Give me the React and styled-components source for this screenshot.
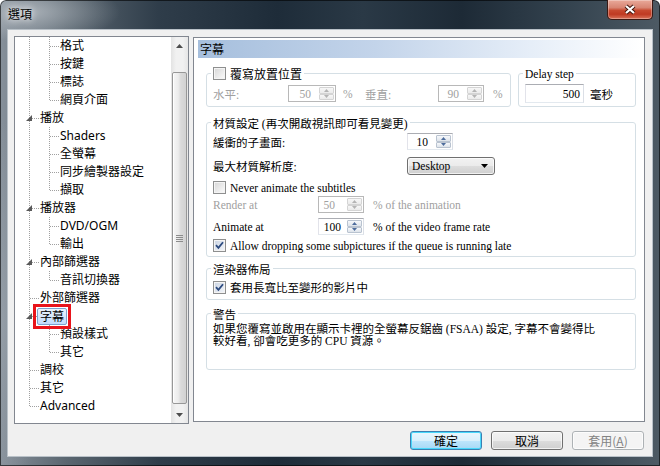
import React from "react";
import styled, { createGlobalStyle } from "styled-components";

const UI_FONT = `"Noto Sans", "Noto Sans CJK TC", sans-serif`;
const PAGE_FONT = `"Liberation Serif", "Noto Sans CJK TC", serif`;
const CJK_FONT = `"Noto Sans CJK TC", "Noto Sans", sans-serif`;

const GlobalStyle = createGlobalStyle`
  html, body { margin: 0; padding: 0; background: #ffffff; }
  body { width: 660px; height: 466px; overflow: hidden; }
`;

const Window = styled.div`
  width: 660px;
  height: 466px;
  display: flex;
  flex-direction: column;
  border-radius: 6px 6px 0 0;
  overflow: hidden;
  background:
    radial-gradient(ellipse 90px 30px at 30px 12px, rgba(190, 196, 202, 0.7), transparent),
    radial-gradient(ellipse 40px 200px at 2px 320px, rgba(170, 178, 186, 0.4), transparent),
    linear-gradient(to right, #86909a 0%, #5a6670 10%, #2f3d4a 24%, #1e2c39 42%, #2a3946 55%, #1d2a36 70%, #34434f 86%, #4d5a64 100%);
  box-shadow: inset 0 0 0 1px rgba(0, 0, 0, 0.6);
`;

const TitleBar = styled.div`
  height: 29px;
  display: flex;
  align-items: flex-start;
  flex: none;
`;

const Title = styled.div`
  margin: 6px 0 0 8px;
  font: 12px/16px ${CJK_FONT};
  color: #000;
  text-shadow: 0 0 6px rgba(255, 255, 255, 0.9), 0 0 10px rgba(255, 255, 255, 0.6);
`;

const CloseBtn = styled.div`
  width: 46px;
  height: 20px;
  margin: 0 7px 0 auto;
  box-sizing: border-box;
  border: 1px solid #3b1a14;
  border-top: none;
  border-radius: 0 0 5px 5px;
  background: linear-gradient(to bottom, #e9a99a 0%, #d88573 40%, #c7492f 55%, #bf3a22 75%, #d9735a 100%);
  box-shadow: inset 0 0 0 1px rgba(255, 255, 255, 0.3);
  display: flex;
  align-items: center;
  justify-content: center;
`;

const Client = styled.div`
  flex: 1;
  margin: 0 7px 9px 7px;
  border: 1px solid #b9c1c8;
  background: #f0f0f0;
  display: flex;
  flex-direction: column;
  padding: 6px 6px 0 6px;
`;

const Body = styled.div`
  display: flex;
  align-items: flex-start;
  gap: 4px;
`;

/* ---------- tree ---------- */

const Tree = styled.div`
  width: 175px;
  height: 388px;
  box-sizing: border-box;
  border: 1px solid #828790;
  background: #fff;
  display: flex;
  flex: none;
`;

const TreeList = styled.div`
  flex: 1;
  display: flex;
  flex-direction: column;
  font: 12px ${UI_FONT};
  color: #000;
`;

const Row = styled.div`
  height: 18px;
  display: flex;
  align-items: center;
  padding-left: 4px;
`;

const dotV = "repeating-linear-gradient(to bottom, #a0a0a0 0 1px, transparent 1px 2px)";
const dotH = "repeating-linear-gradient(to right, #a0a0a0 0 1px, transparent 1px 2px)";

const Guide = styled.div`
  width: 20px;
  height: 18px;
  flex: none;
  display: flex;
  align-items: center;
  justify-content: center;
  background: ${(p) =>
    [
      p.$v === "full" && `${dotV} 10px 0 / 1px 100% no-repeat`,
      p.$v === "half" && `${dotV} 10px 0 / 1px 10px no-repeat`,
      p.$h && `${dotH} 11px 9px / 9px 1px no-repeat`,
    ]
      .filter(Boolean)
      .join(", ") || "none"};
`;

const Label = styled.span`
  padding: 0 1px;
  line-height: 16px;
  white-space: nowrap;
`;

const Marked = styled.span`
  position: relative;
  z-index: 1;
  display: inline-flex;
  border: 3px solid #e8141b;
  padding: 1px;
  margin-left: -6px;
`;

const Selected = styled.span`
  display: inline-block;
  border: 1px solid #7da2ce;
  border-radius: 2px;
  background: linear-gradient(to bottom, #ebf4fd, #c1dcfc);
  padding: 0 2px;
  line-height: 15px;
  white-space: nowrap;
`;

const ScrollBar = styled.div`
  width: 17px;
  flex: none;
  display: flex;
  flex-direction: column;
  background: linear-gradient(to right, #e3e3e3, #f1f1f1 30%, #f1f1f1 70%, #e6e6e6);
`;

const ScrollArrow = styled.div`
  height: 17px;
  display: flex;
  align-items: center;
  justify-content: center;
`;

const Track = styled.div`
  flex: 1;
  display: flex;
  flex-direction: column;
  padding: 18px 0 2px;
`;

const Thumb = styled.div`
  flex: 1;
  margin: 0 1px;
  border: 1px solid #979797;
  border-radius: 2px;
  background: linear-gradient(to right, #f6f6f6 0%, #ececec 40%, #dadada 60%, #d2d2d2 100%);
  box-shadow: inset 1px 0 0 #fff;
  display: flex;
  align-items: center;
  justify-content: center;
`;

/* ---------- page ---------- */

const Panel = styled.div`
  width: 452px;
  height: 385px;
  margin-top: 1px;
  box-sizing: border-box;
  border: 1px solid #828790;
  background: #fff;
  padding: 2px 2px 0 4px;
  font: 11.5px ${PAGE_FONT};
  color: #000;
`;

const Header = styled.div`
  height: 18px;
  line-height: 18px;
  padding-left: 2px;
  font: 12px/18px ${CJK_FONT};
  background: linear-gradient(to right, #a6bfdd 0%, #c3d4ea 40%, #e6eef8 75%, #ffffff 100%);
`;

const Content = styled.div`
  padding: 15px 6px 0 8px;
  display: flex;
  flex-direction: column;
`;

const TopRow = styled.div`
  display: flex;
  gap: 7px;
`;

const Group = styled.div`
  box-sizing: border-box;
  width: ${(p) => (p.$w ? `${p.$w}px` : "auto")};
  height: ${(p) => p.$h}px;
  margin-top: ${(p) => p.$mt || 0}px;
  border: 1px solid #d5dfe5;
  border-radius: 3px;
  padding: 0 6px;
  display: flex;
  flex-direction: column;
`;

const Legend = styled.div`
  align-self: flex-start;
  display: flex;
  align-items: center;
  gap: 4px;
  height: 13px;
  margin: -7px 0 0 -2px;
  padding: 0 2px;
  background: #fff;
  white-space: nowrap;
`;

const Line = styled.div`
  display: flex;
  align-items: center;
  margin-top: ${(p) => p.$mt || 0}px;
  white-space: nowrap;
  color: ${(p) => (p.$off ? "#a0a0a0" : "#000")};
`;

const Text = styled.span`
  width: ${(p) => (p.$w ? `${p.$w}px` : "auto")};
  margin-left: ${(p) => p.$ml || 0}px;
  flex: none;
  color: ${(p) => (p.$off ? "#a0a0a0" : "inherit")};
`;

const SpinBox = styled.div`
  display: flex;
  flex: none;
  box-sizing: border-box;
  width: ${(p) => p.$w}px;
  height: ${(p) => p.$h}px;
  border: 1px solid;
  border-color: ${(p) => (p.$off ? "#b8b8b8" : "#abadb3 #dbdfe6 #e3e9ef #e2e3ea")};
  background: #fff;
  color: ${(p) => (p.$off ? "#a0a0a0" : "#000")};
`;

const SpinValue = styled.div`
  flex: 1;
  text-align: right;
  padding-right: ${(p) => p.$pr}px;
  align-self: center;
`;

const SpinButtons = styled.div`
  width: 15px;
  margin: 1px 1px 1px 0;
  display: flex;
  flex-direction: column;
`;

const SpinBtn = styled.div`
  flex: 1;
  border: 1px solid ${(p) => (p.$off ? "#d4d4d4" : "#b9c3d0")};
  border-radius: 1px;
  background: ${(p) =>
    p.$off ? "linear-gradient(#f7f7f7, #ebebeb)" : "linear-gradient(#f6f8fb, #dde3ea)"};
  display: flex;
  align-items: center;
  justify-content: center;
`;

const Combo = styled.div`
  box-sizing: border-box;
  width: 88px;
  height: 18px;
  border: 1px solid #707070;
  border-radius: 3px;
  background: linear-gradient(to bottom, #f2f2f2 0%, #ebebeb 50%, #dddddd 51%, #cfcfcf 100%);
  box-shadow: inset 0 0 0 1px rgba(255, 255, 255, 0.7);
  display: flex;
  align-items: center;
  justify-content: space-between;
  padding: 0 6px 0 4px;
`;

const Box = styled.span`
  width: 13px;
  height: 13px;
  flex: none;
  box-sizing: border-box;
  border: 1px solid #8e8f8f;
  background: ${(p) =>
    p.$on ? "linear-gradient(135deg, #c9d3e2, #f4f6fa)" : "linear-gradient(135deg, #d6d6d6, #fcfcfc)"};
  box-shadow: inset 0 0 0 1px #f4f4f4;
  display: inline-flex;
  align-items: center;
  justify-content: center;
`;

const CheckLine = styled(Line)`
  gap: 4px;
`;

const Note = styled.div`
  margin-top: 3px;
  line-height: 12px;
  white-space: nowrap;
`;

/* ---------- footer ---------- */

const Footer = styled.div`
  margin-top: 7px;
  display: flex;
  justify-content: flex-end;
  gap: 9px;
  padding-right: 2px;
`;

const Button = styled.div`
  width: 72px;
  height: 19px;
  box-sizing: border-box;
  border-radius: 3px;
  display: flex;
  align-items: center;
  justify-content: center;
  font: 12px ${CJK_FONT};
  border: 1px solid ${(p) => (p.$kind === "default" ? "#3c7fb1" : p.$kind === "off" ? "#adb2b5" : "#707070")};
  color: ${(p) => (p.$kind === "off" ? "#838383" : "#000")};
  background: ${(p) =>
    p.$kind === "default"
      ? "linear-gradient(to bottom, #eaf6fd 0%, #d9f0fc 50%, #bee6fd 51%, #a7d9f5 100%)"
      : p.$kind === "off"
      ? "#f4f4f4"
      : "linear-gradient(to bottom, #f2f2f2 0%, #ebebeb 50%, #dddddd 51%, #cfcfcf 100%)"};
  box-shadow: ${(p) =>
    p.$kind === "default" ? "inset 0 0 0 1px #48d8fb" : "inset 0 0 0 1px rgba(255,255,255,0.7)"};
`;

/* ---------- small drawings ---------- */

const Expander = () => (
  <svg width="6" height="6" viewBox="0 0 6 6">
    <polygon points="6,0 6,6 0,6" fill="#595959" />
  </svg>
);

const Tri = ({ up, color, w = 7, h = 4 }) => (
  <svg width={w} height={h} viewBox="0 0 7 4">
    <polygon points={up ? "3.5,0 7,4 0,4" : "0,0 7,0 3.5,4"} fill={color} />
  </svg>
);

const Check = ({ on }) => (
  <Box $on={on}>
    {on && (
      <svg width="9" height="9" viewBox="0 0 9 9">
        <path d="M1 4.2 L3.4 6.8 L8 1.2" fill="none" stroke="#2c4a7f" strokeWidth="1.8" />
      </svg>
    )}
  </Box>
);

const Spinner = ({ value, w, h = 17, off, pr = 8 }) => (
  <SpinBox $w={w} $h={h} $off={off}>
    <SpinValue $pr={pr}>{value}</SpinValue>
    <SpinButtons>
      <SpinBtn $off={off}>
        <Tri up w={5} h={3} color={off ? "#b4b4b4" : "#4d6c9c"} />
      </SpinBtn>
      <SpinBtn $off={off}>
        <Tri w={5} h={3} color={off ? "#b4b4b4" : "#4d6c9c"} />
      </SpinBtn>
    </SpinButtons>
  </SpinBox>
);

const rows = [
  { text: "格式", level: 1 },
  { text: "按鍵", level: 1 },
  { text: "標誌", level: 1 },
  { text: "網頁介面", level: 1, last: true },
  { text: "播放", level: 0, open: true },
  { text: "Shaders", level: 1 },
  { text: "全螢幕", level: 1 },
  { text: "同步繪製器設定", level: 1 },
  { text: "擷取", level: 1, last: true },
  { text: "播放器", level: 0, open: true },
  { text: "DVD/OGM", level: 1 },
  { text: "輸出", level: 1, last: true },
  { text: "內部篩選器", level: 0, open: true },
  { text: "音訊切換器", level: 1, last: true },
  { text: "外部篩選器", level: 0 },
  { text: "字幕", level: 0, open: true, selected: true },
  { text: "預設樣式", level: 1 },
  { text: "其它", level: 1, last: true },
  { text: "調校", level: 0 },
  { text: "其它", level: 0 },
  { text: "Advanced", level: 0, last: true },
];

const TreeRow = ({ row }) => (
  <Row>
    {row.level === 0 ? (
      <Guide $v={row.last ? "half" : "full"} $h>
        {row.open && <Expander />}
      </Guide>
    ) : (
      <>
        <Guide $v="full" />
        <Guide $v={row.last ? "half" : "full"} $h />
      </>
    )}
    {row.selected ? (
      <Marked>
        <Selected>{row.text}</Selected>
      </Marked>
    ) : (
      <Label>{row.text}</Label>
    )}
  </Row>
);

export default function App() {
  return (
    <>
      <GlobalStyle />
      <Window>
        <TitleBar>
          <Title>選項</Title>
          <CloseBtn>
            <svg width="14" height="11" viewBox="0 0 14 11">
              <path d="M3 2 L11 9 M11 2 L3 9" stroke="#40160e" strokeWidth="4.2" />
              <path d="M3 2 L11 9 M11 2 L3 9" stroke="#ffffff" strokeWidth="2.2" />
            </svg>
          </CloseBtn>
        </TitleBar>
        <Client>
          <Body>
            <Tree>
              <TreeList>
                {rows.map((r, i) => (
                  <TreeRow key={i} row={r} />
                ))}
              </TreeList>
              <ScrollBar>
                <ScrollArrow>
                  <Tri up color="#4d4d4d" />
                </ScrollArrow>
                <Track>
                  <Thumb>
                    <svg width="7" height="7" viewBox="0 0 7 7">
                      <path d="M0 0.5H7M0 2.5H7M0 4.5H7M0 6.5H7" stroke="#8c8c8c" strokeWidth="1" />
                    </svg>
                  </Thumb>
                </Track>
                <ScrollArrow>
                  <Tri color="#4d4d4d" />
                </ScrollArrow>
              </ScrollBar>
            </Tree>

            <Panel>
              <Header>字幕</Header>
              <Content>
                <TopRow>
                  <Group $w={305} $h={34}>
                    <Legend>
                      <Check />
                      <Text style={{ fontFamily: CJK_FONT, fontSize: 12 }}>覆寫放置位置</Text>
                    </Legend>
                    <Line $mt={5} $off>
                      <Text $w={75}>水平:</Text>
                      <Spinner value="50" w={48} off />
                      <Text $w={22} $ml={7}>%</Text>
                      <Text $w={73}>垂直:</Text>
                      <Spinner value="90" w={46} off />
                      <Text $ml={9}>%</Text>
                    </Line>
                  </Group>
                  <Group $w={118} $h={34}>
                    <Legend>Delay step</Legend>
                    <Line $mt={4}>
                      <SpinBox $w={59} $h={19}>
                        <SpinValue $pr={3}>500</SpinValue>
                      </SpinBox>
                      <Text $ml={6}>毫秒</Text>
                    </Line>
                  </Group>
                </TopRow>

                <Group $h={135} $mt={15}>
                  <Legend>材質設定 (再次開啟視訊即可看見變更)</Legend>
                  <Line $mt={4}>
                    <Text $w={194}>緩衝的子畫面:</Text>
                    <Spinner value="10" w={46} />
                  </Line>
                  <Line $mt={7}>
                    <Text $w={194}>最大材質解析度:</Text>
                    <Combo>
                      <span>Desktop</span>
                      <Tri color="#000" />
                    </Combo>
                  </Line>
                  <CheckLine $mt={6}>
                    <Check />
                    <span>Never animate the subtitles</span>
                  </CheckLine>
                  <Line $mt={2} $off>
                    <Text $w={105}>Render at</Text>
                    <Spinner value="50" w={46} off pr={12} />
                    <Text $ml={9}>% of the animation</Text>
                  </Line>
                  <Line $mt={5}>
                    <Text $w={105}>Animate at</Text>
                    <Spinner value="100" w={46} pr={6} />
                    <Text $ml={9}>% of the video frame rate</Text>
                  </Line>
                  <CheckLine $mt={4}>
                    <Check on />
                    <span>Allow dropping some subpictures if the queue is running late</span>
                  </CheckLine>
                </Group>

                <Group $h={32} $mt={11}>
                  <Legend>渲染器佈局</Legend>
                  <CheckLine $mt={4}>
                    <Check on />
                    <span>套用長寬比至變形的影片中</span>
                  </CheckLine>
                </Group>

                <Group $h={57} $mt={13}>
                  <Legend>警告</Legend>
                  <Note>
                    如果您覆寫並啟用在顯示卡裡的全螢幕反鋸齒 (FSAA) 設定, 字幕不會變得比
                    <br />
                    較好看, 卻會吃更多的 CPU 資源。
                  </Note>
                </Group>
              </Content>
            </Panel>
          </Body>

          <Footer>
            <Button $kind="default">確定</Button>
            <Button>取消</Button>
            <Button $kind="off">
              <span>
                套用(<u>A</u>)
              </span>
            </Button>
          </Footer>
        </Client>
      </Window>
    </>
  );
}
